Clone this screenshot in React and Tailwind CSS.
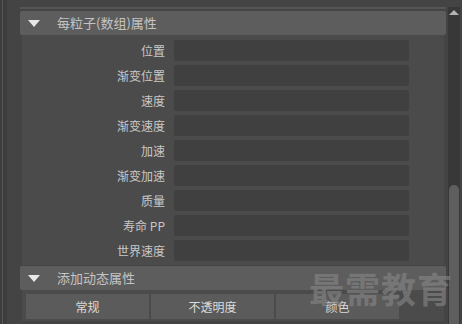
const rows = ["位置", "渐变位置", "速度", "渐变速度", "加速", "渐变加速", "质量", "寿命 PP", "世界速度"];

const Header = ({ title }) => (
  <div className="flex h-[24px] items-center rounded-[2px] bg-[#5d5d5d]">
    <div className="ml-[8px] h-0 w-0 border-x-[6px] border-t-[7px] border-x-transparent border-t-[#e8e8e8]" />
    <span className="ml-[17px] text-[13px] text-[#c4c4c4]">{title}</span>
  </div>
);

export default function App() {
  return (
    <div
      className="relative flex h-[324px] w-[462px] overflow-hidden bg-[#444444]"
      style={{ fontFamily: '"Noto Sans CJK SC", "Noto Sans", sans-serif' }}
    >
      <div className="flex w-[7px] bg-[#3d3d3d]">
        <div className="ml-[2px] w-px bg-[#575757]" />
      </div>

      <div className="ml-[13px] flex w-[426px] flex-col">
        <div className="mt-[7px] h-[2px] bg-[#555555]" />
        <div className="mt-[2px]">
          <Header title="每粒子(数组)属性" />
        </div>
        <div className="mx-[2px] flex flex-col gap-[4px] bg-[#4b4b4b] pb-[4px] pt-[5px]">
          {rows.map((r) => (
            <div key={r} className="flex h-[21px] items-center">
              <div className="w-[144px] pr-[1px] text-right text-[12px] text-[#c8c8c8]">{r}</div>
              <div className="ml-[8px] h-[21px] w-[235px] rounded-[2px] bg-[#404040]" />
            </div>
          ))}
        </div>
        <div className="mt-px">
          <Header title="添加动态属性" />
        </div>
        <div className="mx-[2px] flex h-[31px] gap-[2px] bg-[#4b4b4b] pl-[4px] pt-[4px]">
          {["常规", "不透明度", "颜色"].map((b) => (
            <div
              key={b}
              className="flex h-[25px] w-[123px] items-center justify-center bg-[#5b5b5b] text-[12px] text-[#dcdcdc]"
            >
              {b}
            </div>
          ))}
        </div>
      </div>

      <div className="ml-[2px] mt-[7px] flex w-[12px] flex-col items-center bg-[#383838]">
        <div className="mt-[3px] h-0 w-0 border-x-[5px] border-b-[5px] border-x-transparent border-b-[#b4b4b4]" />
        <div className="mt-[170px] h-[200px] w-[10px] rounded-t-[5px] bg-[#5e5e5e]" />
      </div>

      <div className="pointer-events-none absolute left-[309px] top-[262px] text-[35px] font-bold tracking-[1px] text-[#888888]/60">
        最需教育
      </div>
    </div>
  );
}
